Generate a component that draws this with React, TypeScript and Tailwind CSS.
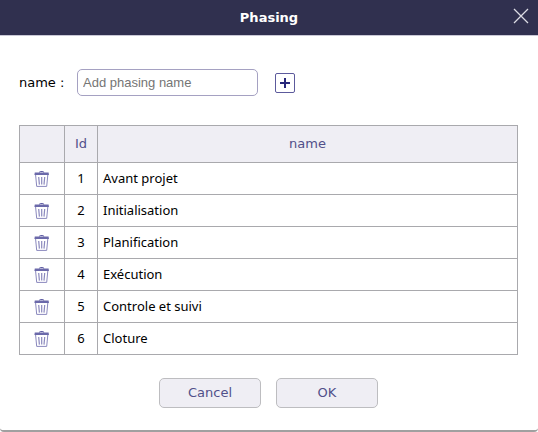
import { useState } from "react";

const initialPhases = [
  "Avant projet",
  "Initialisation",
  "Planification",
  "Exécution",
  "Controle et suivi",
  "Cloture",
];

function TrashIcon() {
  return (
    <svg width="16" height="16" viewBox="0 0 16 16" fill="none" aria-hidden="true">
      <path d="M5.6 1.6V1.2Q5.6 .5 6.3 .5H8.9Q9.6 .5 9.6 1.2V1.6" stroke="#5f5da3" strokeWidth="1" />
      <path d="M.8 1.4H14.6L15 4H.4Z" fill="#6b69aa" />
      <path d="M1.6 4L2.7 15.4H12.7L13.8 4" stroke="#8a88bd" strokeWidth="1" />
      <path d="M4.7 6L5.4 13.6M7.7 6V13.6M10.7 6L10 13.6" stroke="#8a88bd" strokeWidth="1.2" />
    </svg>
  );
}

export default function App() {
  const [name, setName] = useState("");
  const [phases, setPhases] = useState(initialPhases);

  return (
    <div
      role="dialog"
      aria-labelledby="title"
      className="overflow-hidden rounded-b-sm border-b-2 border-[#a0a0a0] bg-white font-['DejaVu_Sans',Verdana,sans-serif] text-[13px] text-black"
    >
      <header className="grid h-9 grid-cols-[1fr_auto_1fr] items-center border-b border-[#c9c8d6] bg-[#30304f] px-2">
        <h1 id="title" className="col-start-2 font-bold text-white">
          Phasing
        </h1>
        <button type="button" aria-label="Close" className="justify-self-end">
          <svg width="18" height="18" viewBox="0 0 18 18" className="mb-1 block" stroke="#dcdce4" strokeWidth="1.3">
            <path d="M2 2L16 16M16 2L2 16" />
          </svg>
        </button>
      </header>

      <div className="pt-[33px] pr-5 pb-[22px] pl-[19px]">
        <form
          className="flex items-center"
          onSubmit={(e) => {
            e.preventDefault();
            if (name.trim()) setPhases([...phases, name.trim()]);
            setName("");
          }}
        >
          <label htmlFor="phase" className="w-[58px]">
            name :
          </label>
          <input
            id="phase"
            value={name}
            onChange={(e) => setName(e.target.value)}
            placeholder="Add phasing name"
            className="h-[27px] w-[181px] rounded-[5px] border border-[#a5a1c2] px-[5px] font-['Liberation_Sans',Arial,sans-serif] placeholder:text-[#757575]"
          />
          <button
            type="submit"
            aria-label="Add"
            className="ml-[17px] flex size-5 items-center justify-center rounded-xs border border-[#5c5a9c]"
          >
            <svg width="10" height="10" viewBox="0 0 10 10" stroke="#28287a" strokeWidth="2" aria-hidden="true">
              <path d="M5 0V10M0 5H10" />
            </svg>
          </button>
        </form>

        <table className="mt-[29px] w-full border-collapse">
          <thead>
            <tr className="h-[37px] bg-[#efeef4] text-[#51508a]">
              <th className="w-[45px] border border-[#a9a9ad]" aria-label="Delete" />
              <th className="w-[33px] border border-[#a9a9ad] font-normal">Id</th>
              <th className="border border-[#a9a9ad] font-normal">name</th>
            </tr>
          </thead>
          <tbody className="font-['Noto_Sans',Tahoma,sans-serif]">
            {phases.map((phase, i) => (
              <tr key={i} className="h-8">
                <td className="border border-[#a9a9ad]">
                  <button
                    type="button"
                    aria-label={`Delete ${phase}`}
                    className="mx-auto block"
                    onClick={() => setPhases(phases.filter((_, j) => j !== i))}
                  >
                    <TrashIcon />
                  </button>
                </td>
                <td className="border border-[#a9a9ad] text-center">{i + 1}</td>
                <td className="border border-[#a9a9ad] px-[5px]">{phase}</td>
              </tr>
            ))}
          </tbody>
        </table>

        <div className="mt-[23px] flex justify-center gap-[15px] text-[#51508a]">
          <button type="button" className="h-[30px] w-[102px] rounded-[5px] border border-[#bdbdc0] bg-[#efeef4]">
            Cancel
          </button>
          <button type="button" className="h-[30px] w-[102px] rounded-[5px] border border-[#bdbdc0] bg-[#efeef4]">
            OK
          </button>
        </div>
      </div>
    </div>
  );
}
